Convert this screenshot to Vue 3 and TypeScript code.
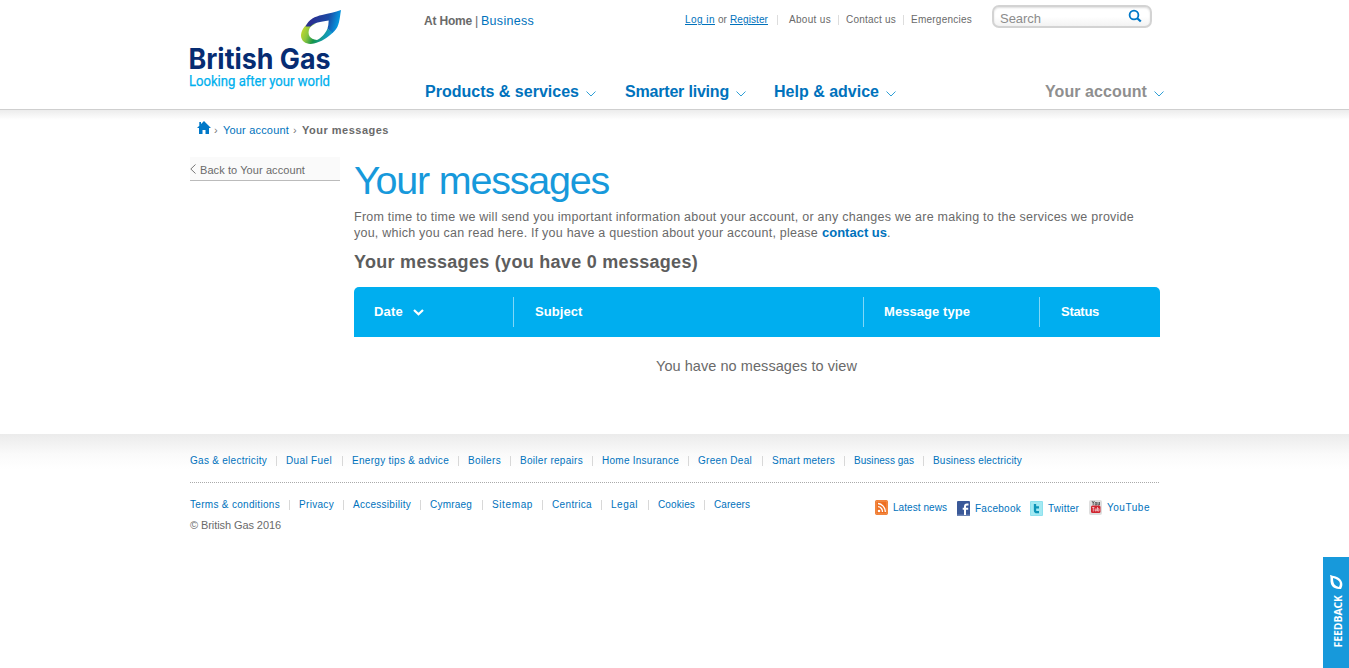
<script setup lang="ts">
import type { Directive } from 'vue'

interface FooterLink { label: string; text: number; cell: number }

// Adjusts tracking so that a label occupies the given width.
const vFit: Directive<HTMLElement, number> = {
  mounted(el, binding) {
    const count = (el.textContent ?? '').trim().length
    const natural = el.getBoundingClientRect().width
    el.style.letterSpacing = `${(binding.value - natural) / Math.max(1, count)}px`
  },
}

const productLinks: FooterLink[] = [
  { label: 'Gas & electricity', text: 77, cell: 96 },
  { label: 'Dual Fuel', text: 46, cell: 66 },
  { label: 'Energy tips & advice', text: 97, cell: 116 },
  { label: 'Boilers', text: 33, cell: 52 },
  { label: 'Boiler repairs', text: 63, cell: 82 },
  { label: 'Home Insurance', text: 77, cell: 96 },
  { label: 'Green Deal', text: 54, cell: 74 },
  { label: 'Smart meters', text: 63, cell: 82 },
  { label: 'Business gas', text: 60, cell: 79 },
  { label: 'Business electricity', text: 89, cell: 99 },
]
const legalLinks: FooterLink[] = [
  { label: 'Terms & conditions', text: 90, cell: 109 },
  { label: 'Privacy', text: 35, cell: 54 },
  { label: 'Accessibility', text: 58, cell: 77 },
  { label: 'Cymraeg', text: 42, cell: 62 },
  { label: 'Sitemap', text: 41, cell: 60 },
  { label: 'Centrica', text: 40, cell: 59 },
  { label: 'Legal', text: 27, cell: 47 },
  { label: 'Cookies', text: 37, cell: 56 },
  { label: 'Careers', text: 36, cell: 46 },
]
</script>

<template>
  <div class="page">
    <header class="header">
      <a class="logo">
        <svg width="160" height="100" viewBox="0 0 160 100">
          <defs>
            <linearGradient id="blue" gradientUnits="userSpaceOnUse" x1="118" y1="20" x2="149" y2="28">
              <stop offset="0.1" stop-color="#2a2f91" /><stop offset="0.6" stop-color="#1b4ba5" /><stop offset="0.85" stop-color="#0a84d0" /><stop offset="1" stop-color="#00a5e8" />
            </linearGradient>
            <linearGradient id="green" gradientUnits="userSpaceOnUse" x1="112" y1="28" x2="140" y2="40">
              <stop offset="0" stop-color="#c4d82e" /><stop offset="0.25" stop-color="#8cc63f" /><stop offset="0.5" stop-color="#16944a" /><stop offset="0.75" stop-color="#149a9c" /><stop offset="1" stop-color="#109bdc" />
            </linearGradient>
          </defs>
          <path fill="url(#green)" d="M119 23C114 26 111 31 111 36C111.500 42 117 45 124 43.500C131 42 138 37.500 143 32.500L137.500 28.500C135 34.500 131 38 127 40C119.500 39.500 117 34 119.500 28.500C120.500 26.500 123 24.500 126 23.500Z" />
          <path fill="url(#blue)" d="M151 10C149.500 19 149.500 26 144.500 31L142.500 33L137.500 28.500Q138.600 25 138.700 20.500C130 22 124 22.500 120.500 26.500L115.500 26.500C119 19 125 16.500 132 15C139 13.500 145 12 151 10Z" />
          <text class="brand" x="-1.5" y="68.500" textLength="142" lengthAdjust="spacingAndGlyphs">British Gas</text>
          <text class="tagline" x="-1" y="86" textLength="141" lengthAdjust="spacingAndGlyphs">Looking after your world</text>
        </svg>
      </a>
      <div class="top">
        <div class="region"><b v-fit="48">At Home</b><span>|</span><a v-fit="53">Business</a></div>
        <div class="utility">
          <a v-fit="30" class="u">Log in</a><span v-fit="9">or</span><a v-fit="38" class="u">Register</a><i></i>
          <span v-fit="42">About us</span><i></i><span v-fit="50">Contact us</span><i></i><span v-fit="61">Emergencies</span>
        </div>
        <div class="search">
          <span v-fit="41">Search</span>
          <svg width="14" height="14" viewBox="0 0 14 14" fill="none" stroke="#0078c8"><circle cx="6" cy="6" r="4.4" stroke-width="1.8" /><path d="M9 9l3.8 3.5" stroke-width="2.3" /></svg>
        </div>
      </div>
      <nav class="nav">
        <a><span v-fit="154">Products &amp; services</span><svg class="chev" viewBox="0 0 10 6"><path d="M.5 .5L5 5L9.5 .5" /></svg></a>
        <a><span v-fit="104">Smarter living</span><svg class="chev" viewBox="0 0 10 6"><path d="M.5 .5L5 5L9.5 .5" /></svg></a>
        <a><span v-fit="105">Help &amp; advice</span><svg class="chev" viewBox="0 0 10 6"><path d="M.5 .5L5 5L9.5 .5" /></svg></a>
        <a class="account"><span v-fit="102">Your account</span><svg class="chev" viewBox="0 0 10 6"><path d="M.5 .5L5 5L9.5 .5" /></svg></a>
      </nav>
    </header>
    <div class="shade"></div>

    <div class="crumbs">
      <svg width="14" height="13" viewBox="0 0 14 13"><path fill="#0078c8" d="M7 0L14 7H12V13H8.5V9H5.500V13H2V7H0L2.300 4.700V1H4V3Z" /></svg>
      <em>›</em><a v-fit="66">Your account</a><em>›</em><b v-fit="87">Your messages</b>
    </div>

    <main class="body">
      <aside class="back">
        <svg width="6" height="10" viewBox="0 0 6 10" fill="none" stroke="#777"><path d="M5.5 .5L.8 5L5.5 9.5" /></svg>
        <span v-fit="105">Back to Your account</span>
      </aside>
      <section class="content">
        <h1><span v-fit="255">Your messages</span></h1>
        <p class="intro">
          <span v-fit="780">From time to time we will send you important information about your account, or any changes we are making to the services we provide</span><br>
          <span v-fit="464">you, which you can read here. If you have a question about your account, please</span><a v-fit="65">contact us</a>.
        </p>
        <h2><span v-fit="344">Your messages (you have 0 messages)</span></h2>
        <div class="thead">
          <div><span v-fit="29">Date</span><svg width="11" height="7" viewBox="0 0 11 7" fill="none" stroke="#fff" stroke-width="2.2"><path d="M1 1L5.5 5.3L10 1" /></svg></div>
          <div><span v-fit="47.5">Subject</span></div>
          <div><span v-fit="86">Message type</span></div>
          <div><span v-fit="38">Status</span></div>
        </div>
        <p class="empty"><span v-fit="201">You have no messages to view</span></p>
      </section>
    </main>

    <footer class="footer">
      <ul class="links products">
        <li v-for="l in productLinks" :key="l.label" :style="{ width: l.cell + 'px' }"><a v-fit="l.text">{{ l.label }}</a></li>
      </ul>
      <div class="lower">
        <ul class="links legal">
          <li v-for="l in legalLinks" :key="l.label" :style="{ width: l.cell + 'px' }"><a v-fit="l.text">{{ l.label }}</a></li>
        </ul>
        <div class="social">
          <svg viewBox="0 0 13 15"><rect width="13" height="15" rx="2" fill="#ee6f22" /><rect x="1" y="1" width="11" height="13" rx="1.5" fill="none" stroke="#f49b59" /><g fill="none" stroke="#fff" stroke-width="1.3"><path d="M3 3.500A7.500 8.500 0 0 1 10.300 12M3 6.700A4.500 5.200 0 0 1 7.500 12" /></g><circle cx="4" cy="11" r="1.3" fill="#fff" /></svg>
          <a v-fit="54">Latest news</a>
          <svg viewBox="0 0 13 15" class="low"><rect width="13" height="15" rx="1" fill="#3b5998" /><path d="M0 13.500H13V15H0Z" fill="#6d84b4" /><path d="M11.5 3.500H10C8.500 3.500 8 4.200 8 5.500V14M5.700 7.700H11.200" fill="none" stroke="#fff" stroke-width="2" /></svg>
          <a v-fit="46" class="low">Facebook</a>
          <svg viewBox="0 0 13 15" class="low"><rect width="13" height="15" rx="1" fill="#8ee1ee" /><rect x="1" y="1" width="11" height="13" fill="#a3e9f2" /><path d="M5 3V9.200Q5 11.200 7 11.200H9M5 6.300H9" fill="none" stroke="#0c94b8" stroke-width="2.3" /></svg>
          <a v-fit="31" class="low">Twitter</a>
          <svg viewBox="0 0 13 15"><rect width="13" height="15" rx="2" fill="#dedede" /><path d="M3 1L4.200 3V5M5.400 1L4.200 3M6.200 2.500H7.700V5H6.200ZM9 2V5H10.500V2" fill="none" stroke="#444" stroke-width=".8" /><rect x="2" y="5.500" width="9.500" height="7.500" rx="1.5" fill="#cf2530" /><path d="M3.200 7.500H5.400M4.300 7.500V11.500M6.200 8.500V11H7.300V8.500M8.500 7V11H10V8.800H8.500" fill="none" stroke="#fff" stroke-width=".6" /></svg>
          <a v-fit="43">YouTube</a>
        </div>
      </div>
      <p class="copy"><span v-fit="91">© British Gas 2016</span></p>
    </footer>

    <a class="feedback">
      <svg width="26" height="111" viewBox="0 0 26 111">
        <path fill="#fff" fill-rule="evenodd" d="M7 18C10 19 14 19 17 22C20 25 20 29 18 32C12 32 9 30 8 27C7 24 8 21 7 18ZM10 21C10 27 12 29 16 30C18 26 17 23 10 21Z" />
        <text transform="translate(19 90.5) rotate(-90)" textLength="52.5" lengthAdjust="spacingAndGlyphs">FEEDBACK</text>
      </svg>
    </a>
  </div>
</template>

<style>
body { margin: 0; background: #fff; overflow: hidden; }
</style>
<style scoped>
.page { height: 668px; font-family: "Liberation Sans", Arial, sans-serif; color: #6a6a6a; font-size: 13px; overflow: hidden; }
.page * { box-sizing: border-box; }
.page span, .page a, .page b { white-space: nowrap; }
a { color: #0072bc; }
h1, h2, p, ul { margin: 0; padding: 0; }
h1 span, h2 span, .copy span, .empty span { display: inline-block; }

.header { height: 109px; padding-left: 190px; display: grid; grid-template-columns: 234px 740px; grid-template-rows: 73px 36px; }
.logo { grid-row: 1 / 3; }
.logo svg { display: block; overflow: visible; }
.brand { font: bold 28px Inter, sans-serif; fill: #062c72; }
.tagline { font: 14px Roboto, sans-serif; fill: #00b0ee; stroke: #00b0ee; stroke-width: .25px; }
.top { display: flex; align-items: flex-start; line-height: 16px; }
.region { display: grid; grid-template-columns: 51px 6px auto; width: 261px; padding-top: 13px; justify-items: start; font-size: 12.5px; }
.region b { font-size: 12px; }
.utility { display: grid; grid-template-columns: 33px 12px 47px 12px 49px 8px 57px 8px 81px; width: 307px; padding-top: 12px; font-size: 10px; justify-items: start; }
.utility i { height: 10px; border-left: 1px solid #ddd; margin-top: 3px; }
.u { text-decoration: underline; }
.search { display: flex; width: 160px; height: 23px; margin-top: 5px; border: 2px solid #d3d3d3; border-radius: 7px; background: linear-gradient(#fff 50%, #f3f3f3); box-shadow: inset 0 1px 2px #ddd; color: #8c8c8c; align-items: center; padding: 4px 8px 0 6px; justify-content: space-between; }
.search svg { margin-top: -5px; }
.nav { display: grid; grid-template-columns: 200px 149px 271px 130px; padding-left: 1px; font-weight: bold; font-size: 16px; line-height: 36px; }
.nav a { display: flex; align-items: center; }
.nav span { padding-top: 1px; }
.nav .account { color: #8f8f8f; }
.chev { width: 10px; height: 6px; margin: 4px 0 0 7px; fill: none; stroke: #2f9fd6; stroke-width: 1; }
.shade { height: 11px; border-top: 1px solid #cfcfcf; background: linear-gradient(#ececec, #fff); }

.crumbs { display: grid; grid-template-columns: 17px 10px 69px 10px auto; justify-items: start; align-items: center; padding-left: 197px; height: 20px; line-height: 20px; font-size: 11px; }
.crumbs svg { margin-top: -5px; }
.crumbs a, .crumbs b { margin-left: -1px; }
.crumbs em { font-style: normal; margin-top: -1px; color: #777; }
.body { display: flex; padding: 17px 0 0 190px; height: 294px; }
.back { display: flex; align-items: center; width: 150px; height: 24px; border-bottom: 1px solid #bbb; background: #fafafa; margin-right: 14px; font-size: 11px; gap: 4px; padding-top: 2px; }
.back svg { margin-top: -2px; }
.content { width: 806px; }
h1 { font-size: 39.5px; font-weight: normal; line-height: 46px; height: 52px; color: #1799db; }
.intro { line-height: 16px; height: 40px; width: 806px; font-size: 12.5px; }
.intro span, .intro a { display: inline-block; }
.intro a { font-weight: bold; font-size: 13px; margin-left: 4px; }
h2 { font-size: 18px; line-height: 26px; height: 38px; color: #5d5d5d; }
.thead { display: grid; grid-template-columns: 159px 350px 176px 121px; height: 50px; padding-top: 10px; border-radius: 5px 5px 0 0; background: #00aeef; color: #fff; font-weight: bold; }
.thead div { display: flex; height: 30px; line-height: 30px; align-items: center; padding-left: 20px; }
.thead div + div { border-left: 1px solid #80d7f7; padding-left: 21px; }
.thead div:nth-child(3) { padding-left: 20px; }
.thead svg { margin: 1px 0 0 10px; }
.empty { padding: 20px 0 0 302px; line-height: 18px; font-size: 14.5px; }

.footer { height: 234px; padding: 17px 0 0 190px; background: linear-gradient(#ebebeb, #fafafa 20px, #fff 35px); font-size: 10px; }
.links { display: flex; list-style: none; }
.links li { display: flex; align-items: center; height: 20px; line-height: 20px; }
.links li:not(:last-child)::after { content: ""; margin-left: auto; margin-right: 9px; width: 1px; height: 10px; background: #d8d8d8; }
.products { height: 32px; width: 969px; border-bottom: 1px dotted #aaa; padding-bottom: 12px; }
.lower { display: flex; height: 34px; }
.legal { width: 685px; padding-top: 12px; }
.social { display: grid; grid-template-columns: 18px 64px 18px 55px 18px 41px 18px 50px; padding-top: 17px; justify-items: start; align-items: start; }
.social svg { width: 13px; height: 15px; }
.social a { line-height: 16px; }
.low { margin-top: 1px; }
.copy { line-height: 16px; font-size: 11px; }
.feedback { position: fixed; right: 0; bottom: 0; width: 26px; height: 111px; background: #1799db; }
.feedback text { font: bold 10.5px "Open Sans", sans-serif; fill: #fff; }
</style>
